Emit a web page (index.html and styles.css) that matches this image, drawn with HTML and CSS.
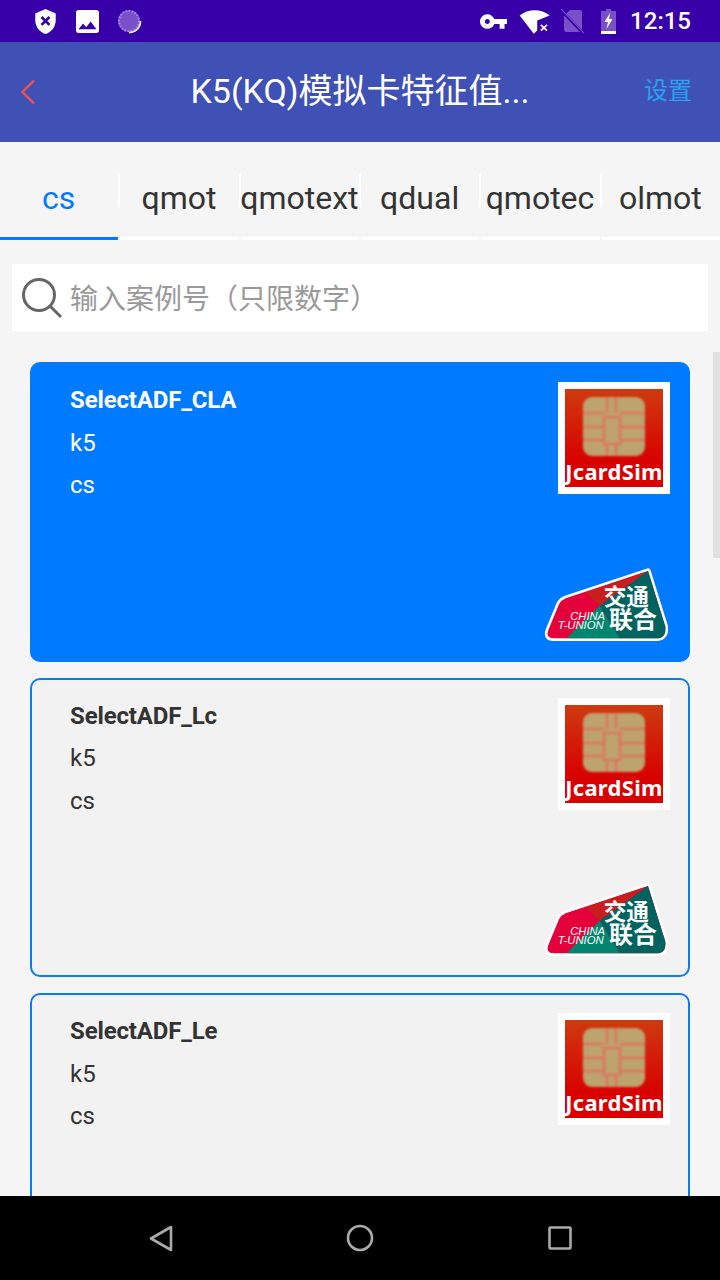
FILE: index.html
```html
<!DOCTYPE html>
<html lang="en">

<head>
    <meta charset="UTF-8">
    <meta name="viewport" content="width=device-width, initial-scale=1.0">
    <title>K5(KQ)</title>
    <link rel="stylesheet" href="styles.css">
</head>

<body>
    <svg class="defs" width="0" height="0">
        <symbol id="chip" viewBox="0 0 62 59">
            <rect width="62" height="59" rx="9" fill="#bda36e" />
            <g fill="none" stroke="#dd7760" stroke-width="2.4">
                <path d="M24 0V16M33 0V16M0 16H21M37 16H62M0 30H21M37 30H62M0 43H21M37 43H62M24 47V59M33 47V59" />
                <rect x="21" y="20" width="16" height="27" />
            </g>
        </symbol>
        <symbol id="tunion" viewBox="40 33 381 228">
            <path d="M108 130L355 48L407 215Q410 250 380 250H72Q47 250 56 225L88 148Q95 135 108 130Z" fill="#e4003a" stroke="#fff" stroke-width="16" stroke-linejoin="round" paint-order="stroke" />
            <path d="M168 112L355 48L210 152Z" fill="#c81e1e" />
            <path d="M355 48L407 215Q410 250 380 250H270L210 152Z" fill="#00635f" />
            <path d="M210 152L270 250H110Z" fill="#00866f" />
            <g fill="#fff" font-family="'Noto Sans CJK SC', sans-serif" font-weight="700">
                <text x="222" y="150" font-size="68">交通</text>
                <text x="238" y="219" font-size="72">联合</text>
            </g>
            <g fill="#fff" font-family="'Liberation Sans', sans-serif" font-style="italic">
                <text x="122" y="195" font-size="34" textLength="104" lengthAdjust="spacingAndGlyphs">CHINA</text>
                <text x="84" y="222" font-size="34" textLength="138" lengthAdjust="spacingAndGlyphs">T-UNION</text>
            </g>
        </symbol>
    </svg>

    <div class="phone">
        <div class="statusbar">
            <div class="status-left">
                <svg width="21" height="25" viewBox="3 1 18 22">
                    <path d="M12 1L3 5v6c0 5.55 3.84 10.74 9 12 5.16-1.26 9-6.45 9-12V5l-9-4z" fill="#fff" />
                    <path d="M8.5 8l7 7M15.5 8l-7 7" stroke="#3700a8" stroke-width="2.4" />
                </svg>
                <svg class="ml-20" width="23" height="23" viewBox="3 3 18 18">
                    <path d="M21 19V5c0-1.1-.9-2-2-2H5c-1.1 0-2 .9-2 2v14c0 1.1.9 2 2 2h14c1.1 0 2-.9 2-2zM8.5 13.5l2.5 3.01L14.5 12l4.5 6H5l3.5-4.5z" fill="#fff" fill-rule="evenodd" />
                </svg>
                <svg class="ml-18" width="25" height="25" viewBox="0 0 25 25">
                    <circle cx="12" cy="12" r="11" fill="#7a50c8" />
                    <circle cx="12" cy="12" r="10" fill="none" stroke="#a88de2" stroke-width="2" stroke-dasharray="1.5 1.6" />
                    <path d="M23.5 12A11 11 0 0 1 12 23.5" fill="none" stroke="#fff" stroke-width="1.5" />
                </svg>
            </div>
            <div class="status-right">
                <svg width="27" height="15" viewBox="1 6 22 12">
                    <path d="M12.65 10C11.83 7.67 9.61 6 7 6c-3.31 0-6 2.69-6 6s2.69 6 6 6c2.61 0 4.83-1.67 5.65-4H17v4h4v-4h2v-4H12.65zM7 14c-1.1 0-2-.9-2-2s.9-2 2-2 2 .9 2 2-.9 2-2 2z" fill="#fff" />
                </svg>
                <svg class="ml-12" width="31" height="25" viewBox="178 24 92 74">
                    <path d="M180 43C205 22 245 22 269 43L232 58V88L222 97Z" fill="#fff" />
                    <path d="M243 71L261 88M261 71L243 88" stroke="#fff" stroke-width="5" />
                </svg>
                <svg class="ml-11" width="23" height="24" viewBox="0 0 23 24">
                    <path d="M9 1H19Q21 1 21 3V21Q21 23 19 23H5Q3 23 3 21V7Z" fill="#7a50c8" />
                    <path d="M0 1L22 24" stroke="#3700a8" stroke-width="3" />
                    <path d="M0 0L23 24" stroke="#7a50c8" stroke-width="1.2" />
                </svg>
                <svg class="ml-17" width="15" height="25" viewBox="0 0 15 25">
                    <path d="M5 0H10V2H15V22H0V2H5Z" fill="#7a50c8" />
                    <rect y="22" width="15" height="3" fill="#fff" />
                    <path d="M9 4L3.5 13H7L5.5 20L11.5 10H8Z" fill="#fff" />
                </svg>
                <span class="clock">12:15</span>
            </div>
        </div>

        <div class="header">
            <div class="back">
                <svg width="16" height="26" viewBox="0 0 16 26">
                    <path d="M14 1.5L2.5 13L14 24.5" fill="none" stroke="#ef5350" stroke-width="2.4" />
                </svg>
            </div>
            <div class="title">K5(KQ)模拟卡特征值...</div>
            <div class="setting">设置</div>
        </div>

        <div class="main">
            <div class="tabs">
                <div class="tab tab-active">cs</div>
                <div class="tab-sep"></div>
                <div class="tab">qmot</div>
                <div class="tab-sep"></div>
                <div class="tab">qmotext</div>
                <div class="tab-sep"></div>
                <div class="tab">qdual</div>
                <div class="tab-sep"></div>
                <div class="tab">qmotec</div>
                <div class="tab-sep"></div>
                <div class="tab">olmot</div>
            </div>

            <div class="search">
                <svg width="42" height="42" viewBox="0 0 42 42">
                    <circle cx="18" cy="18" r="15.5" fill="none" stroke="#666" stroke-width="3" />
                    <path d="M29 29L40 40" stroke="#666" stroke-width="3" />
                </svg>
                <input class="search-input" type="text" placeholder="输入案例号（只限数字）">
            </div>

            <div class="list">
                <div class="card card-active">
                    <div class="card-info">
                        <div class="card-name">SelectADF_CLA</div>
                        <div>k5</div>
                        <div>cs</div>
                    </div>
                    <div class="card-side">
                        <div class="thumb">
                            <div class="thumb-inner">
                                <svg class="chip" width="62" height="59"><use href="#chip" /></svg>
                                <div class="thumb-text">JcardSim</div>
                            </div>
                        </div>
                        <svg width="127" height="76"><use href="#tunion" /></svg>
                    </div>
                </div>
                <div class="card">
                    <div class="card-info">
                        <div class="card-name">SelectADF_Lc</div>
                        <div>k5</div>
                        <div>cs</div>
                    </div>
                    <div class="card-side">
                        <div class="thumb">
                            <div class="thumb-inner">
                                <svg class="chip" width="62" height="59"><use href="#chip" /></svg>
                                <div class="thumb-text">JcardSim</div>
                            </div>
                        </div>
                        <svg width="127" height="76"><use href="#tunion" /></svg>
                    </div>
                </div>
                <div class="card">
                    <div class="card-info">
                        <div class="card-name">SelectADF_Le</div>
                        <div>k5</div>
                        <div>cs</div>
                    </div>
                    <div class="card-side">
                        <div class="thumb">
                            <div class="thumb-inner">
                                <svg class="chip" width="62" height="59"><use href="#chip" /></svg>
                                <div class="thumb-text">JcardSim</div>
                            </div>
                        </div>
                        <svg width="127" height="76"><use href="#tunion" /></svg>
                    </div>
                </div>
            </div>
            <div class="scrollbar"></div>
        </div>

        <div class="navbar">
            <div class="nav-item">
                <svg width="24" height="27" viewBox="0 0 24 27">
                    <path d="M22 2V25L2 13.5Z" fill="none" stroke="#aaa" stroke-width="2.6" stroke-linejoin="round" />
                </svg>
            </div>
            <div class="nav-item">
                <svg width="28" height="28" viewBox="0 0 28 28">
                    <circle cx="14" cy="14" r="12" fill="none" stroke="#aaa" stroke-width="2.6" />
                </svg>
            </div>
            <div class="nav-item">
                <svg width="24" height="24" viewBox="0 0 24 24">
                    <rect x="1.5" y="1.5" width="21" height="21" rx="1" fill="none" stroke="#aaa" stroke-width="2.6" />
                </svg>
            </div>
        </div>
    </div>
</body>

</html>
```

FILE: styles.css
```css
body {
    margin: 0;
    font-family: Roboto, "Noto Sans CJK SC", sans-serif;
    background-color: #f5f5f5;
}

.defs {
    position: absolute;
}

.phone {
    width: 720px;
    height: 1280px;
    display: flex;
    flex-direction: column;
    overflow: hidden;
}

/* status bar */
.statusbar {
    height: 42px;
    flex: none;
    display: flex;
    justify-content: space-between;
    align-items: center;
    padding: 0 29px 0 35px;
    background-color: #3700a8;
}

.status-left,
.status-right {
    display: flex;
    align-items: center;
}

.ml-11 {
    margin-left: 11px;
}

.ml-12 {
    margin-left: 12px;
}

.ml-17 {
    margin-left: 17px;
}

.ml-18 {
    margin-left: 18px;
}

.ml-20 {
    margin-left: 20px;
}

.clock {
    margin-left: 14px;
    color: #fff;
    font-size: 24px;
    font-weight: 500;
}

/* header */
.header {
    height: 100px;
    box-sizing: border-box;
    flex: none;
    display: flex;
    align-items: center;
    padding: 0 28px 0 20px;
    background-color: #3f51b5;
}

.back {
    width: 56px;
    display: flex;
}

.title {
    flex: 1;
    text-align: center;
    color: #fff;
    font-size: 34px;
    line-height: 40px;
    margin-top: -3px;
}

.setting {
    width: 48px;
    color: #29a0f0;
    font-size: 24px;
    line-height: 30px;
    margin-top: -2px;
}

/* tabs */
.main {
    flex: 1;
    min-height: 0;
    position: relative;
    overflow: hidden;
}

.tabs {
    height: 98px;
    display: flex;
    align-items: flex-start;
}

.tab {
    flex: 1;
    min-width: 0;
    height: 79px;
    display: flex;
    justify-content: center;
    align-items: center;
    padding: 16px 1px 0 0;
    border-bottom: 3px solid #fff;
    color: #333;
    font-size: 32px;
    line-height: 40px;
    white-space: nowrap;
}

.tab-active {
    color: #007aff;
    border-bottom-color: #007aff;
}

.tab-sep {
    width: 2px;
    height: 33px;
    flex: none;
    margin-top: 32px;
    background-color: #fff;
}

/* search */
.search {
    height: 67px;
    margin: 24px 12px 0;
    padding-left: 9px;
    display: flex;
    align-items: center;
    background-color: #fff;
}

.search-input {
    flex: 1;
    min-width: 0;
    margin-left: 7px;
    padding: 4px 0 0;
    border: none;
    outline: none;
    background: none;
    font-family: Roboto, "Noto Sans CJK SC", sans-serif;
    font-size: 28px;
}

.search-input::placeholder {
    color: #999;
    opacity: 1;
}

/* cards */
.list {
    margin: 31px 30px 0;
}

.card {
    height: 299.5px;
    box-sizing: border-box;
    margin-bottom: 16px;
    padding: 15px 18px 18px 38px;
    display: flex;
    justify-content: space-between;
    border: 2px solid #0a7cf0;
    border-radius: 10px;
    background-color: #f2f2f2;
    color: #333;
    font-size: 24px;
    line-height: 42.5px;
}

.card-active {
    border-color: #007aff;
    background-color: #007aff;
    color: #fff;
}

.card-name {
    font-weight: 700;
    letter-spacing: -0.15px;
}

.card-side {
    padding-top: 3px;
    display: flex;
    flex-direction: column;
    justify-content: space-between;
    align-items: flex-end;
}

.thumb {
    width: 112px;
    height: 112px;
    box-sizing: border-box;
    padding: 7px;
    background-color: #fff;
}

.thumb-inner {
    height: 98px;
    display: flex;
    flex-direction: column;
    align-items: center;
    overflow: hidden;
    background: linear-gradient(#cf3a0f, #d80000 75%);
}

.chip {
    margin-top: 8px;
    filter: blur(0.8px);
}

.thumb-text {
    color: #fff;
    font-family: "Noto Sans", sans-serif;
    font-size: 22px;
    font-weight: 700;
    letter-spacing: 0.3px;
    line-height: 31px;
    white-space: nowrap;
}

.scrollbar {
    position: absolute;
    top: 210px;
    right: 0;
    width: 7px;
    height: 206px;
    background-color: #e0e0e0;
}

/* nav bar */
.navbar {
    height: 84px;
    flex: none;
    display: flex;
    justify-content: center;
    background-color: #000;
}

.nav-item {
    width: 199.5px;
    display: flex;
    justify-content: center;
    align-items: center;
}
```
